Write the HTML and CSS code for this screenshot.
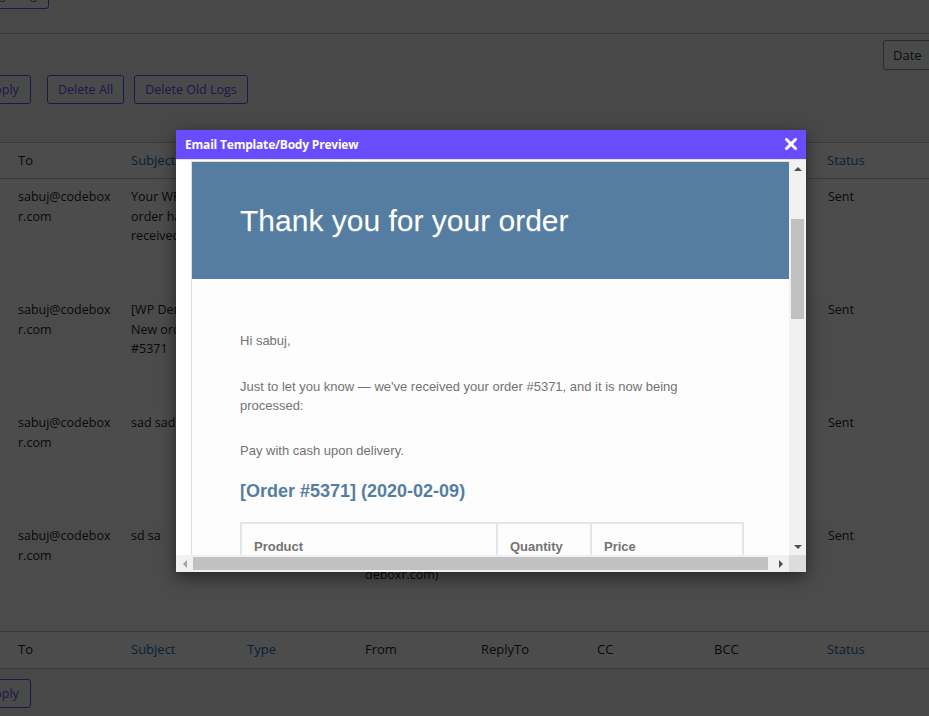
FILE: index.html
```html
<!DOCTYPE html>
<html lang="en">
<head>
<meta charset="utf-8">
<title>Email Logs</title>
<link rel="stylesheet" href="styles.css">
</head>
<body>
<div class="page">
  <div class="topbar">
    <button class="btn btn-purple btn-top">Purge Log</button>
  </div>
  <div class="filters">
    <button class="btn btn-date">Date</button>
  </div>
  <div class="bulk">
    <button class="btn btn-purple btn-apply">Apply</button>
    <button class="btn btn-purple btn-del-all">Delete All</button>
    <button class="btn btn-purple btn-del-old">Delete Old Logs</button>
  </div>

  <div class="logs">
    <div class="lrow lhead">
      <div class="cell"></div>
      <div class="cell c-to">To</div>
      <div class="cell link">Subject</div>
      <div class="cell link">Type</div>
      <div class="cell">From</div>
      <div class="cell">ReplyTo</div>
      <div class="cell">CC</div>
      <div class="cell">BCC</div>
      <div class="cell link">Status</div>
    </div>
    <div class="lrow ldata">
      <div class="cell"></div>
      <div class="cell c-to">sabuj@codebox<wbr>r.com</div>
      <div class="cell">Your WP Demo order has been received!</div>
      <div class="cell">WooCommerce</div>
      <div class="cell">Sabuj Kundu (sabuj@co<wbr>deboxr.com)</div>
      <div class="cell"></div>
      <div class="cell"></div>
      <div class="cell"></div>
      <div class="cell">Sent</div>
    </div>
    <div class="lrow ldata alt">
      <div class="cell"></div>
      <div class="cell c-to">sabuj@codebox<wbr>r.com</div>
      <div class="cell">[WP Demo]: New order #5371</div>
      <div class="cell">WooCommerce</div>
      <div class="cell">Sabuj Kundu (sabuj@co<wbr>deboxr.com)</div>
      <div class="cell"></div>
      <div class="cell"></div>
      <div class="cell"></div>
      <div class="cell">Sent</div>
    </div>
    <div class="lrow ldata">
      <div class="cell"></div>
      <div class="cell c-to">sabuj@codebox<wbr>r.com</div>
      <div class="cell">sad sad</div>
      <div class="cell">Test</div>
      <div class="cell">Sabuj Kundu (sabuj@co<wbr>deboxr.com)</div>
      <div class="cell"></div>
      <div class="cell"></div>
      <div class="cell"></div>
      <div class="cell">Sent</div>
    </div>
    <div class="lrow ldata alt last">
      <div class="cell"></div>
      <div class="cell c-to">sabuj@codebox<wbr>r.com</div>
      <div class="cell">sd sa</div>
      <div class="cell">Test</div>
      <div class="cell">Sabuj Kundu (sabuj@co<wbr>deboxr.com)</div>
      <div class="cell"></div>
      <div class="cell"></div>
      <div class="cell"></div>
      <div class="cell">Sent</div>
    </div>
    <div class="lrow lhead lfoot">
      <div class="cell"></div>
      <div class="cell c-to">To</div>
      <div class="cell link">Subject</div>
      <div class="cell link">Type</div>
      <div class="cell">From</div>
      <div class="cell">ReplyTo</div>
      <div class="cell">CC</div>
      <div class="cell">BCC</div>
      <div class="cell link">Status</div>
    </div>
  </div>

  <div class="bulk bulk-bottom">
    <button class="btn btn-purple btn-apply">Apply</button>
  </div>
</div>

<div class="overlay"></div>

<div class="modal">
  <div class="modal-head">
    <span class="modal-title">Email Template/Body Preview</span>
    <button class="modal-close" aria-label="Close">
      <svg width="12" height="12" viewBox="0 0 12 12"><path d="M1.5 1.5 L10.5 10.5 M10.5 1.5 L1.5 10.5" stroke="#fff" stroke-width="3" stroke-linecap="square" fill="none"/></svg>
    </button>
  </div>
  <div class="frame">
    <div class="viewport">
      <div class="email-box">
        <div class="email-header">
          <h1>Thank you for your order</h1>
        </div>
        <div class="email-body">
          <p class="p1">Hi sabuj,</p>
          <p class="p2">Just to let you know &mdash; we've received your order #5371, and it is now being processed:</p>
          <p class="p3">Pay with cash upon delivery.</p>
          <h2>[Order #5371] (2020-02-09)</h2>
          <table class="order">
            <thead>
              <tr>
                <th class="o-prod">Product</th>
                <th class="o-qty">Quantity</th>
                <th class="o-price">Price</th>
              </tr>
            </thead>
            <tbody>
              <tr>
                <td>Demo Product</td>
                <td>1</td>
                <td>$10.00</td>
              </tr>
            </tbody>
          </table>
        </div>
      </div>
    </div>
    <div class="vbar">
      <div class="sb-btn"><span class="tri tri-up"></span></div>
      <div class="sb-track"><div class="vthumb"></div></div>
      <div class="sb-btn"><span class="tri tri-down"></span></div>
    </div>
    <div class="hbar">
      <div class="sb-btn"><span class="tri tri-left"></span></div>
      <div class="sb-track"><div class="hthumb"></div></div>
      <div class="sb-btn"><span class="tri tri-right"></span></div>
    </div>
    <div class="corner"></div>
  </div>
</div>
</body>
</html>
```
FILE: styles.css
```css
* { box-sizing: border-box; }

html, body {
  margin: 0;
  height: 100%;
}

body {
  overflow: hidden;
  background: #f1f1f1;
  font-family: "Open Sans", "Noto Sans", sans-serif;
  font-size: 12.5px;
  color: #1d2327;
}

.page {
  width: 929px;
  height: 716px;
}

/* ---------- buttons ---------- */
.btn {
  display: block;
  font: inherit;
  height: 30px;
  padding: 0 8px;
  border: 1px solid #8c8f94;
  border-radius: 3px;
  background: #f6f7f7;
  color: #2c3338;
  white-space: nowrap;
  text-align: center;
  cursor: pointer;
}

.btn-purple {
  border-color: #6a4cff;
  color: #6a4cff;
}

.topbar {
  display: flex;
  align-items: flex-start;
  height: 34px;
  border-bottom: 1px solid #c3c4c7;
}

.btn-top {
  margin: -21px 0 0 -40px;
  width: 89px;
  text-align: right;
  padding-right: 11px;
}

.filters {
  display: flex;
  justify-content: flex-end;
  margin: 6px -16px 0 0;
}

.btn-date {
  width: 62px;
  text-align: left;
  padding-left: 9px;
  font-size: 13px;
}

.bulk {
  display: flex;
  gap: 10px;
  margin-top: 5px;
}

.bulk .btn { height: 29px; }

.btn-apply {
  width: 57px;
  margin-left: -26px;
  margin-right: 6px;
}

.btn-del-all { width: 77px; }
.btn-del-old { width: 114px; }

.bulk-bottom { margin-top: 10px; }

/* ---------- log table ---------- */
.logs {
  margin-top: 38px;
}

.lrow {
  display: grid;
  grid-template-columns: 8px 113px 116px 118px 116px 116px 117px 113px 140px;
  width: max-content;
  background: #fff;
}

.cell {
  padding: 0 10px;
  line-height: 19.5px;
  overflow-wrap: break-word;
}

.c-to { padding-right: 0; }

.link { color: #2271b1; }

.lhead {
  height: 37px;
  align-items: center;
  border-top: 1px solid #c3c4c7;
  border-bottom: 1px solid #c3c4c7;
  font-size: 13px;
}

.lfoot { height: 38px; }

.ldata {
  height: 113px;
  align-items: start;
}

.ldata .cell { padding-top: 8px; }
.ldata .cell:last-child { padding-left: 11px; }

.ldata.alt { background: #fbfbfb; }
.ldata.last { height: 113px; }

/* ---------- overlay + modal ---------- */
.overlay {
  position: fixed;
  inset: 0;
  background: rgba(0, 0, 0, 0.7);
}

.modal {
  position: absolute;
  left: 176px;
  top: 130px;
  width: 630px;
  height: 442px;
  background: #fff;
  box-shadow: 0 5px 15px rgba(0, 0, 0, 0.5);
  display: flex;
  flex-direction: column;
}

.modal-head {
  flex: none;
  height: 30px;
  background: #6a4cff;
  border-bottom: 1px solid #e4e4e4;
  display: flex;
  align-items: center;
  justify-content: space-between;
  padding: 0 9px 1px 9px;
}

.modal-title {
  color: #fff;
  font-family: "Open Sans", sans-serif;
  font-weight: 700;
  font-size: 12px;
  letter-spacing: -0.2px;
}

.modal-close {
  border: 0;
  background: none;
  padding: 0;
  width: 12px;
  height: 12px;
  display: flex;
  cursor: pointer;
}

.frame {
  flex: 1;
  display: grid;
  grid-template-columns: 1fr 17px;
  grid-template-rows: 1fr 17px;
  min-height: 0;
}

.viewport {
  overflow: hidden;
  background: #fff;
  padding: 1px 0 0 15px;
}

/* ---------- email ---------- */
.email-box {
  width: 602px;
  border: 1px solid #dedede;
  background: #fdfdfd;
  font-family: "Liberation Sans", Arial, sans-serif;
}

.email-header {
  background: #557da1;
  padding: 36px 48px;
}

.email-header h1 {
  margin: 0;
  color: #fff;
  font-size: 30px;
  font-weight: 300;
  line-height: 45px;
  text-shadow: 0 1px 0 #7797b4;
}

.email-body {
  padding: 52px 48px 32px;
  color: #737373;
  font-size: 13px;
  line-height: 19.5px;
}

.email-body p { margin: 0 0 25px; }
.email-body .p1 { margin-bottom: 26px; }
.email-body .p3 { margin-bottom: 20px; }

.email-body h2 {
  margin: 0 0 19px;
  color: #557da1;
  font-size: 18px;
  font-weight: 700;
  line-height: 130%;
}

.order {
  width: 100%;
  table-layout: fixed;
  border: 1px solid #e5e5e5;
  border-spacing: 0;
  color: #737373;
  font-size: 13px;
}

.order th,
.order td {
  border: 1px solid #e5e5e5;
  padding: 13px 12px 12px;
  text-align: left;
  line-height: 19.5px;
}

.order th { font-weight: 700; }
.o-prod { width: 256px; }
.o-qty { width: 94px; }
.o-price { width: 152px; }

/* ---------- scrollbars ---------- */
.vbar,
.hbar {
  background: #f1f1f1;
  display: flex;
}

.vbar { flex-direction: column; }

.sb-btn {
  flex: none;
  width: 17px;
  height: 17px;
  display: flex;
  align-items: center;
  justify-content: center;
}

.sb-track {
  flex: 1;
  min-width: 0;
  min-height: 0;
}

.vthumb {
  margin: 42px 2px 0;
  height: 100px;
  background: #c1c1c1;
}

.hthumb {
  margin: 2px 0;
  width: 575px;
  height: 13px;
  background: #c1c1c1;
}

.corner { background: #dcdcdc; }

.tri {
  width: 0;
  height: 0;
  border-style: solid;
  border-color: transparent;
}

.tri-up {
  border-width: 0 4px 4px;
  border-bottom-color: #505050;
}

.tri-down {
  border-width: 4px 4px 0;
  border-top-color: #505050;
}

.tri-left {
  border-width: 4px 4px 4px 0;
  border-right-color: #a3a3a3;
}

.tri-right {
  border-width: 4px 0 4px 4px;
  border-left-color: #505050;
}
```
